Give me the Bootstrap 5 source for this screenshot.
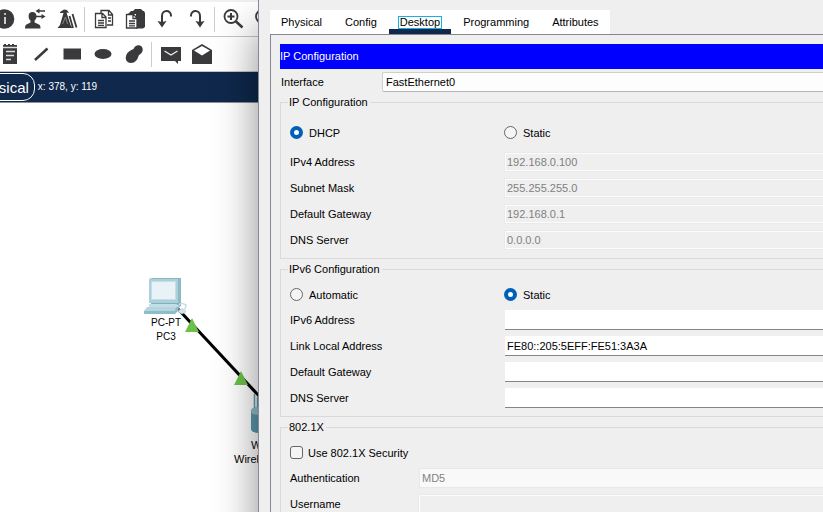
<!DOCTYPE html>
<html lang="en">
<head>
<meta charset="utf-8">
<meta name="viewport" content="width=device-width, initial-scale=1">
<title>IP Configuration</title>
<link href="https://cdn.jsdelivr.net/npm/bootstrap@5.3.0/dist/css/bootstrap.min.css" rel="stylesheet">
<style>
body { font-family: "Liberation Sans", Arial, sans-serif; font-size: 11px; line-height: 14px; color: #000; background: #fff; }
.workspace { flex: 0 0 258px; min-width: 0; }
.strip { height: 2px; background: #f0f0f0; }
.tools { height: 35px; border-bottom: 1px solid #c4c4c4; color: #3a3a3c; }
.tools-main > :first-child { margin-left: -11px; }
.tools-draw > :first-child { margin-left: -6px; }
.tool { flex: 0 0 31px; height: 34px; padding: 0; border: 0; background: none; color: inherit; display: flex; align-items: center; justify-content: center; }
.tool svg { width: 24px; height: 24px; display: block; }
.divider { flex: 0 0 6px; height: 25px; background: linear-gradient(#ccc, #ccc) 2px 0 / 1px 100% no-repeat; }
.viewbar { height: 31px; background: #0f284c; border-bottom: 1px solid #8c9098; color: #fff; font-size: 10px; }
.view-btn { font-size: 15px; line-height: 18px; color: #fff; background: none; border: 1px solid #fff; border-radius: 12px; height: 28px; padding: 2px 5px 0; margin-left: -33px; }
.coords { margin-left: 3px; }
.canvas { min-height: 0; }
.node-label { position: absolute; font-size: 10px; text-align: center; white-space: nowrap; }
.pc-label { left: 146px; top: 213px; width: 40px; }
.router-model { left: 251px; top: 335px; font-size: 11px; }
.router-name { left: 234px; top: 349px; font-size: 11px; }
.dialog-window { min-width: 0; min-height: 130vh; background: #efefef; border-left: 1px solid #858a96; padding: 10px 0 0 11px; box-shadow: 0 28px 40px rgba(0,0,0,.45); z-index: 1; }
.tab-strip { background: #fff; gap: 1px; width: max-content; height: 24px; }
.tab { display: flex; align-items: center; padding: 0 11px; border: 0; border-bottom: 5px solid transparent; background: none; color: #000; }
.tab span { border: 1px solid transparent; margin: 5px -2px 0; padding: 0 1px; line-height: 11px; }
.tab.active { border-color: #0f284c; }
.tab.active span { border-color: #16b1e0; }
.pane { border-left: 1px solid #838890; border-top: 1px solid #838890; padding: 9px 0 0 9px; min-height: 130vh; }
.heading { background: #00f; color: #fff; height: 25px; font-size: 11px; line-height: 25px; font-weight: 400; margin: 0 0 3px; }
.iface-row { height: 20px; margin-bottom: 3px; }
.iface-row label { flex: 0 0 102px; padding-left: 1px; }
.pick, .entry { appearance: none; border-radius: 0; height: 20px; color: #000; font: inherit; min-width: 0; }
.pick { background: #fdfdfd; border: 1px solid #cfcfcf; border-bottom-color: #b5b5b5; border-right: 0; border-radius: 2px 0 0 2px; padding: 0 3px; opacity: 1; }
.pick:disabled { background: #f9f9f9; border-color: #e8e8e8; color: #838383; padding: 0 2px; }
.entry { background: #fff; border: 0; border-bottom: 1px solid #858585; padding: 0 2px; }
.entry:disabled { height: 18px; background: #efefef; border: 1px solid #fcfcfc; border-right: 0; outline: 1px solid #eaeaea; color: #808080; padding: 0 1px; }
.group { border: 1px solid #dadada; border-right: 0; padding: 6px 0 5px 9px; margin-bottom: 3px; }
.group legend { float: none; width: auto; font-size: 11px; line-height: 14px; height: 14px; margin: 0 0 0 -2px; padding: 0 2px 0 1px; }
.choices { height: 25px; }
.spaced { margin: 5px 0 4px; }
.choice { gap: 6px; }
.security .choice { gap: 5px; }
.choices .choice:first-child { flex: 0 0 214px; }
.mark-box { appearance: none; width: 13px; height: 13px; margin: 0; border: 1px solid #666; background: #f5f5f5; }
.mark-box[type=radio] { border-radius: 50%; }
.mark-box[type=checkbox] { border-radius: 3px; }
.mark-box:checked { border: 4px solid #005fb8; background: #fff; }
.field { height: 26px; }
.field label { flex: 0 0 215px; }
.security .field label { flex-basis: 129px; }
</style>
<script src="https://cdn.jsdelivr.net/npm/bootstrap@5.3.0/dist/js/bootstrap.bundle.min.js"></script>
</head>
<body class="vh-100 overflow-hidden">
<div class="d-flex vh-100 overflow-hidden">
  <main class="workspace d-flex flex-column vh-100 overflow-hidden">
    <div class="strip"></div>
    <div class="tools tools-main d-flex align-items-center">
      <button class="tool" type="button" aria-label="Info"><svg viewBox="0 0 24 24"><circle cx="11.500" cy="12" r="9.800" fill="currentColor"/><path d="M12 10v7" stroke="#ddd" stroke-width="1.800" fill="none"/><circle cx="12" cy="7" r="1.100" fill="#ddd"/></svg></button>
      <button class="tool" type="button" aria-label="User exchange"><svg viewBox="0 0 24 24"><path fill="currentColor" d="M8.500 5c2.600 0 4 1.700 4 4.200 0 2-.8 3.300-1.900 4.300v2l4.400 2c1 .4 1.500 1.500 1.500 4H1c0-2.500.5-3.600 1.500-4l4-2v-2C5.200 12.500 4.600 11 4.600 9c0-2.500 1.400-4 3.900-4z"/><path d="M14 4h7M12 9.500h7" stroke="currentColor" stroke-width="1.300"/><path fill="currentColor" d="M11.500 4l4-2.500v5zM21.500 9.500l-4-2.500v5z"/></svg></button>
      <button class="tool" type="button" aria-label="Network wizard"><svg viewBox="0 0 24 24"><path fill="currentColor" d="M5 5l4-2.500 3 .500 2 3-2.500-.5 4 12.500 2 3H2.500L5 18 8.500 6 5 6z"/><path d="M14.500 9l3.500 12M17.500 7l4 13.500" stroke="currentColor" stroke-width="1.800"/><path d="M7.500 17l3-7 2 7" stroke="#999" stroke-width=".8" fill="none"/></svg></button>
      <span class="divider"></span>
      <button class="tool" type="button" aria-label="Copy"><svg viewBox="0 0 24 24" fill="none" stroke="currentColor" stroke-width="1.300"><path d="M9 6V3.500h8l3.500 4V18H15M16.500 3.500v4.500h4M16 11h3M16 14h3"/><path fill="#fff" d="M3.500 6.500h7L14 10v10.500H3.500zM10 6.500v4h4M6 13.500h6M6 16h6M6 18.300h6"/></svg></button>
      <button class="tool" type="button" aria-label="Paste"><svg viewBox="0 0 24 24"><path fill="currentColor" d="M5 7l3-3h2l2-2h6l2 2h1l1 2v14l-2 1.500h-7V7z"/><path fill="#fff" stroke="currentColor" stroke-width="1.300" d="M3.500 7.500h7L14 11v10H3.500zM10 7.500v4h4M6 14h6M6 16.500h6M6 18.800h6"/></svg></button>
      <button class="tool" type="button" aria-label="Undo"><svg viewBox="0 0 24 24"><path fill="none" stroke="currentColor" stroke-width="2" d="M8 16V9C8 2.500 17 2.500 17 8.500v1"/><path fill="currentColor" d="M3.500 14l4.500 1 4.500-1-4.500 6.500z"/></svg></button>
      <button class="tool" type="button" aria-label="Redo"><svg viewBox="0 0 24 24"><path fill="none" stroke="currentColor" stroke-width="2" d="M15 16V9C15 2.500 6 2.500 6 8.500v1"/><path fill="currentColor" d="M10.500 14l4.500 1 4.500-1-4.500 6.500z"/></svg></button>
      <span class="divider"></span>
      <button class="tool" type="button" aria-label="Zoom in"><svg viewBox="0 0 24 24" fill="none" stroke="currentColor"><circle cx="9" cy="9.500" r="6.500" stroke-width="1.800"/><path stroke-width="2" d="M5.500 9.500h7M9 6v7"/><path stroke-width="2.500" d="M14 14.500l6.500 6"/></svg></button>
      <button class="tool" type="button" aria-label="Zoom reset"><svg viewBox="0 0 24 24" fill="none" stroke="currentColor"><circle cx="9.500" cy="9.500" r="6.500" stroke-width="1.800"/><path stroke-width="2.500" d="M14.500 14.500l6.500 6"/></svg></button>
    </div>
    <div class="tools tools-draw d-flex align-items-center">
      <button class="tool" type="button" aria-label="Note"><svg viewBox="0 0 24 24"><path fill="currentColor" d="M5 3h1V2h2v1h2V2h2v1h2V2h2v1h3v19H5z"/><path stroke="#ddd" stroke-width="1.300" d="M8 9.500h9M8 13.500h8M8 17.500h5M5 5.500h14"/></svg></button>
      <button class="tool" type="button" aria-label="Line"><svg viewBox="0 0 24 24"><path d="M6 18L18.500 6.500" stroke="currentColor" stroke-width="2.500"/></svg></button>
      <button class="tool" type="button" aria-label="Rectangle"><svg viewBox="0 0 24 24"><path fill="currentColor" d="M3.500 6.500h17.500v11H3.500z"/></svg></button>
      <button class="tool" type="button" aria-label="Ellipse"><svg viewBox="0 0 24 24"><ellipse cx="12" cy="12" rx="8.500" ry="5" fill="currentColor"/></svg></button>
      <button class="tool" type="button" aria-label="Freeform"><svg viewBox="0 0 24 24"><path fill="currentColor" d="M11.500 7c1-3 4-4.500 6.500-3.500 3 1.200 3.600 5 1.500 7.500-1 1.300-2.500 1.500-3 3-.6 3.500-3.500 7-7.500 7-3.800 0-6-3-5-7C4.800 10.500 8 8.300 11.500 7z"/></svg></button>
      <span class="divider"></span>
      <button class="tool" type="button" aria-label="Simple message"><svg viewBox="0 0 24 24"><path fill="currentColor" d="M2 5h20v14h-3v3l-3-3H2z"/><path fill="none" stroke="#eee" stroke-width="1.400" d="M5.500 9l6.500 4 6.500-4"/></svg></button>
      <button class="tool" type="button" aria-label="Complex message"><svg viewBox="0 0 24 24"><path fill="currentColor" d="M2 8L12 2l10 6v14H2z"/><path fill="#fff" d="M4 8.500l8-4.500 8 4.500-8 5z"/></svg></button>
    </div>
    <div class="viewbar d-flex align-items-center">
      <button class="view-btn" type="button">Physical</button><span class="coords">x: 378, y: 119</span>
    </div>
    <div class="canvas flex-grow-1 position-relative overflow-hidden">
      <svg width="258" height="409" viewBox="0 103 258 409" aria-hidden="true">
        <path d="M178 309L260 397" stroke="#000" stroke-width="3"/>
        <path fill="#6cc04a" d="M192 318l7 14h-14zM241 371l7 14h-14z"/>
        <path fill="#8fb8c5" d="M149 279l3-1h29v23l-3 2h-29z"/>
        <path fill="#acd0da" d="M149 279h29v24h-29z"/>
        <path fill="#e9f2f6" stroke="#c5dde5" d="M151.500 281.500h24v18h-24z"/>
        <path fill="#7faebd" d="M151 303h27l3-2v5l-4 3h-26z"/>
        <path fill="#c2dfe7" d="M149 304h27l4 2-2 1h-29z"/>
        <path fill="#b6d6df" d="M147 307h30l-3 4h-30z"/>
        <path fill="#8fbccb" d="M144 311h30l3-4 2 3-4 4h-31z"/>
        <path fill="none" stroke="#c9dce3" stroke-width="1.500" d="M179 305q2-3 7 0l-1 4"/>
        <path fill="#d5e3e9" stroke="#a9c4ce" stroke-width=".5" d="M179 310q3-3 6 0l1 2-4 2-4-2z"/>
        <path fill="none" stroke="#5f98ab" stroke-width="1.500" d="M254.500 394v16M257.500 397v14"/>
        <path fill="#5999ad" d="M251 411c0-3 4-4 8-4v26c-5 0-8-2-8-4z"/>
        <path fill="#94bdca" d="M251 411c0-3 4-4 8-4v8c-4 0-8-1-8-4z"/>
      </svg>
      <div class="node-label pc-label">PC-PT<br>PC3</div>
      <div class="node-label router-model">W</div>
      <div class="node-label router-name">Wirel</div>
    </div>
  </main>

  <section class="dialog-window flex-grow-1 position-relative">
    <nav class="tab-strip d-flex">
      <button class="tab" type="button"><span>Physical</span></button>
      <button class="tab" type="button"><span>Config</span></button>
      <button class="tab active" type="button"><span>Desktop</span></button>
      <button class="tab" type="button"><span>Programming</span></button>
      <button class="tab" type="button"><span>Attributes</span></button>
    </nav>
    <div class="pane">
      <h1 class="heading">IP Configuration</h1>
      <div class="iface-row d-flex align-items-center">
        <label for="iface">Interface</label>
        <select id="iface" class="pick flex-grow-1"><option>FastEthernet0</option></select>
      </div>
      <fieldset class="group">
        <legend>IP Configuration</legend>
        <div class="choices spaced d-flex align-items-center">
          <div class="choice d-flex align-items-center"><input class="mark-box" type="radio" name="v4" id="dhcp" checked><label for="dhcp">DHCP</label></div>
          <div class="choice d-flex align-items-center"><input class="mark-box" type="radio" name="v4" id="static4"><label for="static4">Static</label></div>
        </div>
        <div class="field d-flex align-items-center"><label for="ip4">IPv4 Address</label><input id="ip4" class="entry flex-grow-1" type="text" value="192.168.0.100" disabled></div>
        <div class="field d-flex align-items-center"><label for="mask">Subnet Mask</label><input id="mask" class="entry flex-grow-1" type="text" value="255.255.255.0" disabled></div>
        <div class="field d-flex align-items-center"><label for="gw4">Default Gateway</label><input id="gw4" class="entry flex-grow-1" type="text" value="192.168.0.1" disabled></div>
        <div class="field d-flex align-items-center"><label for="dns4">DNS Server</label><input id="dns4" class="entry flex-grow-1" type="text" value="0.0.0.0" disabled></div>
      </fieldset>
      <fieldset class="group">
        <legend>IPv6 Configuration</legend>
        <div class="choices d-flex align-items-center">
          <div class="choice d-flex align-items-center"><input class="mark-box" type="radio" name="v6" id="auto6"><label for="auto6">Automatic</label></div>
          <div class="choice d-flex align-items-center"><input class="mark-box" type="radio" name="v6" id="static6" checked><label for="static6">Static</label></div>
        </div>
        <div class="field d-flex align-items-center"><label for="ip6">IPv6 Address</label><input id="ip6" class="entry flex-grow-1" type="text"></div>
        <div class="field d-flex align-items-center"><label for="local6">Link Local Address</label><input id="local6" class="entry flex-grow-1" type="text" value="FE80::205:5EFF:FE51:3A3A"></div>
        <div class="field d-flex align-items-center"><label for="gw6">Default Gateway</label><input id="gw6" class="entry flex-grow-1" type="text"></div>
        <div class="field d-flex align-items-center"><label for="dns6">DNS Server</label><input id="dns6" class="entry flex-grow-1" type="text"></div>
      </fieldset>
      <fieldset class="group security">
        <legend>802.1X</legend>
        <div class="choices d-flex align-items-center">
          <div class="choice d-flex align-items-center"><input class="mark-box" type="checkbox" id="dot1x"><label for="dot1x">Use 802.1X Security</label></div>
        </div>
        <div class="field d-flex align-items-center"><label for="auth">Authentication</label><select id="auth" class="pick flex-grow-1" disabled><option>MD5</option></select></div>
        <div class="field d-flex align-items-center"><label for="user">Username</label><input id="user" class="entry flex-grow-1" type="text" disabled></div>
      </fieldset>
    </div>
  </section>
</div>
</body>
</html>
